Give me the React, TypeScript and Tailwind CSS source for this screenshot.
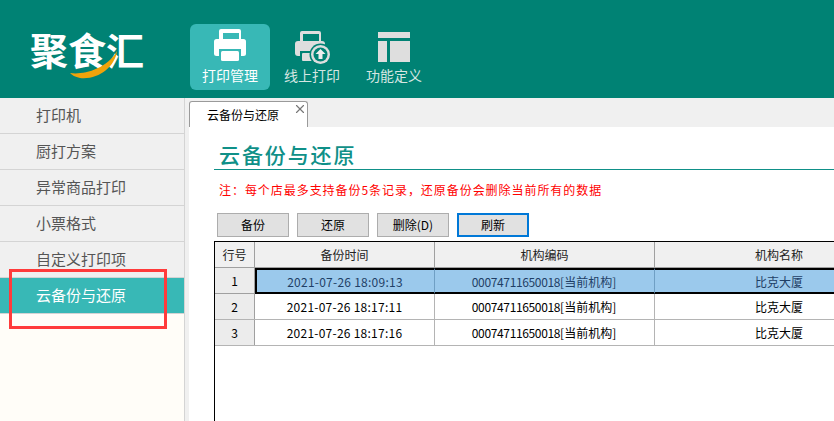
import { X } from "lucide-react";

const menu = ["打印机", "厨打方案", "异常商品打印", "小票格式", "自定义打印项", "云备份与还原"];

const rows = [
  { id: 1, time: "2021-07-26 18:09:13", selected: true },
  { id: 2, time: "2021-07-26 18:17:11", selected: false },
  { id: 3, time: "2021-07-26 18:17:16", selected: false },
];

function PrinterIcon() {
  return (
    <svg width="34" height="33" viewBox="0 0 34 33" fill="#fff">
      <path fillRule="evenodd" d="M7 0h18a2 2 0 0 1 2 2v10H5V2a2 2 0 0 1 2-2zM9 4v7h14V4z" transform="translate(1 0)" />
      <rect x="1" y="10" width="32" height="17" rx="2.500" />
      <rect x="10" y="4" width="16" height="6" fill="#38b8b6" />
      <rect x="6" y="20" width="22" height="8" fill="#38b8b6" />
      <rect x="8" y="22" width="18" height="10" rx="1.500" />
    </svg>
  );
}

function CloudPrintIcon() {
  return (
    <svg className="ml-[2px]" width="36" height="34" viewBox="0 0 36 34" fill="#dedede">
      <path fillRule="evenodd" d="M7 0h17a2 2 0 0 1 2 2v10H5V2a2 2 0 0 1 2-2zM8 3v8h16V3z" />
      <rect x="0" y="10" width="30" height="15" rx="3" />
      <rect x="5" y="20" width="16" height="6" fill="#008274" />
      <rect x="7" y="22" width="13" height="8" rx="1" />
      <circle cx="25.500" cy="23.500" r="11" fill="#008274" />
      <circle cx="25.500" cy="23.500" r="9.500" />
      <circle cx="25.500" cy="23.500" r="7" fill="#008274" />
      <path d="M25.500 18l5 5h-3v5h-4v-5h-3z" fill="#eeeeee" />
    </svg>
  );
}

function LayoutIcon() {
  return (
    <svg width="32" height="30" viewBox="0 0 32 30" fill="#dedede">
      <path d="M0 0h32v6H0z" />
      <path d="M0 9h9v21H0z" />
      <path d="M12 9h20v21H12z" />
    </svg>
  );
}

function Logo() {
  return (
    <div className="relative w-[116px] h-[50px] ml-[30px] mt-[28px] shrink-0">
      <span className="block text-[38px] leading-[42px] font-bold text-white whitespace-nowrap">聚食汇</span>
      <svg className="absolute left-[38px] top-[22px]" width="52" height="30" viewBox="0 0 52 30">
        <path d="M2 23C14 25 38 20 49 1C47 17 30 30 12 28C7 27 4 25 2 23z" fill="#f0a30a" />
      </svg>
    </div>
  );
}

function CodeCell() {
  return (
    <>
      00074711650018<span className="tracking-normal">[当前机构]</span>
    </>
  );
}

export default function App() {
  return (
    <div className="w-[834px] h-[421px] overflow-hidden flex flex-col font-['Noto_Sans_CJK_SC',sans-serif] bg-white">
      {/* Top bar */}
      <header className="h-[98px] bg-[#008274] flex shrink-0">
        <Logo />
        <nav className="flex gap-[2px] ml-[44px] mt-[24px]">
          <div className="w-[80px] h-[66px] rounded-md bg-[#38b8b6] flex flex-col items-center pt-[5px] text-white">
            <PrinterIcon />
            <span className="text-[14px] leading-[20px] mt-[3px]">打印管理</span>
          </div>
          <div className="w-[80px] h-[66px] flex flex-col items-center pt-[7px] text-[#d5e6e2]">
            <CloudPrintIcon />
            <span className="text-[14px] leading-[20px]">线上打印</span>
          </div>
          <div className="w-[80px] h-[66px] flex flex-col items-center pt-[8px] text-[#d5e6e2]">
            <LayoutIcon />
            <span className="text-[14px] leading-[20px] mt-[3px]">功能定义</span>
          </div>
        </nav>
      </header>

      <div className="flex flex-1 min-h-0">
        {/* Sidebar */}
        <aside className="relative w-[185px] shrink-0 bg-[#fffdf8] border-r border-[#d4d4d4]">
          {menu.map((item, i) =>
            i === menu.length - 1 ? (
              <div key={item} className="h-[36px] pl-[36px] flex items-center text-[15px] bg-[#38b8b6] text-white border-b border-[#d4d4d4]">
                {item}
              </div>
            ) : (
              <div key={item} className="h-[36px] pl-[36px] flex items-center text-[15px] bg-[#f0f0f0] text-[#555] border-b border-[#d4d4d4]">
                {item}
              </div>
            ),
          )}
          {/* annotation box */}
          <div className="absolute left-[9px] top-[171px] w-[158px] h-[60px] border-[3px] border-[#ff3b3b]" />
        </aside>

        {/* Main */}
        <main className="flex-1 min-w-0 flex bg-[#f0f0f0]">
          <div className="w-[4px] shrink-0" />
          <div className="flex-1 min-w-0 flex flex-col">
            <div className="h-[29px] shrink-0 flex items-end">
              <div className="relative w-[119px] h-[26px] bg-white border border-b-0 border-[#9a9a9a] rounded-t-[3px] pl-[17px] text-[12px] leading-[25px] text-black">
                云备份与还原
                <X className="absolute right-[0px] top-[0px] w-[14px] h-[14px] text-[#777]" strokeWidth={2} />
              </div>
            </div>
            <div className="flex-1 min-h-0 bg-white pl-[25px] flex flex-col overflow-hidden">
              <div className="h-[43px] shrink-0 border-b border-[#0f9088] pl-[5px] pt-[13px]">
                <h1 className="text-[21px] leading-[28px] font-medium tracking-[1.9px] text-[#0f9088] whitespace-nowrap">云备份与还原</h1>
              </div>
              <p className="ml-[5px] mt-[11px] text-[12px] leading-[17px] tracking-[0.95px] text-[#f00] whitespace-nowrap">
                注：每个店最多支持备份5条记录，还原备份会删除当前所有的数据
              </p>
              <div className="flex gap-[8px] ml-[3px] mt-[15px] shrink-0">
                {["备份", "还原", "删除(D)"].map((b) => (
                  <button key={b} className="w-[72px] h-[24px] bg-[#e1e1e1] border border-[#adadad] text-[12px] leading-none text-black">
                    {b}
                  </button>
                ))}
                <button className="w-[72px] h-[24px] bg-[#e1e1e1] border-2 border-[#0078d7] text-[12px] leading-none text-black">刷新</button>
              </div>

              {/* Table */}
              <div className="mt-[4px] flex-1 min-h-0 border-l border-t border-black text-[12px] text-black overflow-hidden">
                <div className="w-[700px]">
                  <div className="grid grid-cols-[40px_180px_220px_260px] grid-rows-[minmax(0,1fr)] h-[26px] bg-[#f0f0f0] border-b border-[#a0a0a0] text-center leading-[25px] text-[#222]">
                    <div className="border-r border-[#a0a0a0]">行号</div>
                    <div className="border-r border-[#a0a0a0]">备份时间</div>
                    <div className="border-r border-[#a0a0a0]">机构编码</div>
                    <div className="pr-[12px]">机构名称</div>
                  </div>
                  {rows.map((r) =>
                    r.selected ? (
                      <div key={r.id} className="grid grid-cols-[40px_180px_220px_260px] grid-rows-[minmax(0,1fr)] h-[26px] text-center leading-[23px] text-[#1f3f66]">
                        <div className="bg-[#ececec] border-r border-b border-[#a0a0a0] leading-[25px] text-black">{r.id}</div>
                        <div className="bg-[#9bc9ec] border-y-2 border-l-2 border-r border-black border-r-[#6f9fc4] tracking-[0.25px] pr-[1px]">{r.time}</div>
                        <div className="bg-[#9bc9ec] border-y-2 border-black border-r border-r-[#6f9fc4] tracking-[-0.35px] pr-[1px]">
                          <CodeCell />
                        </div>
                        <div className="bg-[#9bc9ec] border-y-2 border-black pr-[12px]">比克大厦</div>
                      </div>
                    ) : (
                      <div key={r.id} className="grid grid-cols-[40px_180px_220px_260px] grid-rows-[minmax(0,1fr)] h-[26px] text-center leading-[25px] border-b border-[#b4b4b4]">
                        <div className="bg-[#ececec] border-r border-[#a0a0a0]">{r.id}</div>
                        <div className="border-r border-[#b4b4b4] tracking-[0.25px]">{r.time}</div>
                        <div className="border-r border-[#b4b4b4] tracking-[-0.35px] pr-[1px]">
                          <CodeCell />
                        </div>
                        <div className="pr-[12px]">比克大厦</div>
                      </div>
                    ),
                  )}
                </div>
              </div>
            </div>
          </div>
        </main>
      </div>
    </div>
  );
}
